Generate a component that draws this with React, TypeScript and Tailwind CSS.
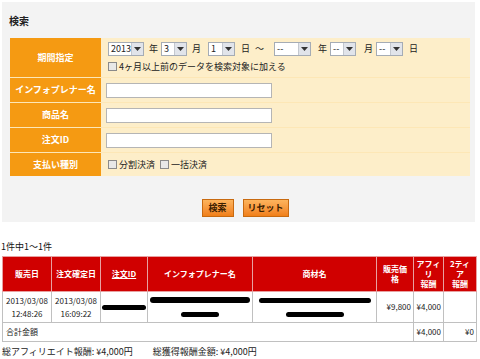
import React from 'react';

const font = { fontFamily: '"Noto Sans CJK JP", "DejaVu Sans", sans-serif' };

function Select({ value, w }: { value: string; w: string }) {
  return (
    <span className={`inline-flex h-[14px] items-center border border-[#a5acb5] bg-white ${w}`}>
      <span className="flex-1 pl-[2px] text-[9px] leading-none text-[#222]">{value}</span>
      <span className="flex h-[12px] w-[12px] items-center justify-center border-l border-[#c4c8cf] bg-[#e1e4ea]">
        <svg width="7" height="4" viewBox="0 0 7 4">
          <path d="M0 0 L7 0 L3.5 4 Z" fill="#333" />
        </svg>
      </span>
    </span>
  );
}

function Check({ label }: { label: string }) {
  return (
    <span className="inline-flex items-center gap-[2px] text-[9px] text-[#222]">
      <span className="inline-block h-[9px] w-[9px] border border-[#8a8a8a] bg-[#e8e8e8]" />
      {label}
    </span>
  );
}

function Label({ children }: { children: React.ReactNode }) {
  return (
    <div className="flex items-center justify-center bg-[#f59a12] text-[9px] font-bold text-white">
      {children}
    </div>
  );
}

function Blob({ className }: { className: string }) {
  return <span className={`block rounded-full bg-black ${className}`} />;
}

export default function App() {
  return (
    <div className="h-[359px] w-[480px] overflow-hidden bg-white" style={font}>
      {/* search panel */}
      <div className="mx-[2px] mt-[2px] h-[220px] w-[473px] bg-[#f3f3f3] pt-[11px]">
        <div className="pl-[7px] text-[10px] font-bold text-[#222]">検索</div>

        <div className="ml-[8px] mt-[10px] grid w-[460px] grid-cols-[91px_1fr] grid-rows-[39px_24px_24px_24px_23px] gap-y-px bg-[#fde7b6]">
          <Label>期間指定</Label>
          <div className="flex flex-col justify-center gap-[4px] bg-[#fdeec9] pl-[7px]">
            <div className="flex items-center text-[9px] text-[#222]">
              <Select value="2013" w="w-[36px]" />
              <span className="ml-[5px] mr-[3px]">年</span>
              <Select value="3" w="w-[26px]" />
              <span className="ml-[5px] mr-[7px]">月</span>
              <Select value="1" w="w-[27px]" />
              <span className="ml-[6px]">日</span>
              <span className="ml-[5px] mr-[10px]">～</span>
              <Select value="--" w="w-[37px]" />
              <span className="ml-[7px] mr-[3px]">年</span>
              <Select value="--" w="w-[26px]" />
              <span className="ml-[8px] mr-[3px]">月</span>
              <Select value="--" w="w-[27px]" />
              <span className="ml-[6px]">日</span>
            </div>
            <Check label="4ヶ月以上前のデータを検索対象に加える" />
          </div>

          <Label>インフォプレナー名</Label>
          <div className="flex items-center bg-[#fdeec9] pl-[5px]">
            <span className="block h-[15px] w-[166px] border border-[#b5b5b5] bg-white" />
          </div>

          <Label>商品名</Label>
          <div className="flex items-center bg-[#fdeec9] pl-[5px]">
            <span className="block h-[15px] w-[166px] border border-[#b5b5b5] bg-white" />
          </div>

          <Label>注文ID</Label>
          <div className="flex items-center bg-[#fdeec9] pl-[5px]">
            <span className="block h-[15px] w-[166px] border border-[#b5b5b5] bg-white" />
          </div>

          <Label>支払い種別</Label>
          <div className="flex items-center gap-[5px] bg-[#fdeec9] pl-[7px]">
            <Check label="分割決済" />
            <Check label="一括決済" />
          </div>
        </div>

        <div className="mt-[23px] flex justify-center gap-[9px] pl-[13px]">
          <button className="h-[18px] w-[32px] border border-[#c86a10] bg-linear-to-b from-[#fdb45c] to-[#f07f16] text-[9px] font-bold text-[#3a2000]">
            検索
          </button>
          <button className="h-[18px] w-[46px] border border-[#c86a10] bg-linear-to-b from-[#fdb45c] to-[#f07f16] text-[9px] font-bold text-[#3a2000]">
            リセット
          </button>
        </div>
      </div>

      {/* results */}
      <div className="mt-[20px] pl-[1px] text-[9px] leading-none text-[#111]">1件中1～1件</div>

      <table className="ml-[2px] mt-[5px] w-[474px] table-fixed border-collapse text-[8px] text-[#222]">
        <colgroup>
          <col className="w-[49px]" />
          <col className="w-[49px]" />
          <col className="w-[47px]" />
          <col className="w-[105px]" />
          <col className="w-[124px]" />
          <col className="w-[37px]" />
          <col className="w-[30px]" />
          <col className="w-[33px]" />
        </colgroup>
        <thead>
          <tr className="h-[35px] bg-[#d00000] text-[8px] font-bold text-white">
            <th className="border border-[#e8a0a0] font-bold">販売日</th>
            <th className="border border-[#e8a0a0] font-bold">注文確定日</th>
            <th className="border border-[#e8a0a0] font-bold underline">注文ID</th>
            <th className="border border-[#e8a0a0] font-bold">インフォプレナー名</th>
            <th className="border border-[#e8a0a0] font-bold">商材名</th>
            <th className="border border-[#e8a0a0] font-bold leading-[10px]">販売価<br />格</th>
            <th className="border border-[#e8a0a0] font-bold leading-[10px]">アフィ<br />リ<br />報酬</th>
            <th className="border border-[#e8a0a0] font-bold leading-[10px]">2ティ<br />ア<br />報酬</th>
          </tr>
        </thead>
        <tbody>
          <tr className="h-[31px]">
            <td className="border border-[#c0c0c0] text-center leading-[13px]">2013/03/08<br />12:48:26</td>
            <td className="border border-[#c0c0c0] text-center leading-[13px]">2013/03/08<br />16:09:22</td>
            <td className="border border-[#c0c0c0]">
              <Blob className="mx-auto h-[5px] w-[44px]" />
            </td>
            <td className="border border-[#c0c0c0]">
              <div className="flex flex-col items-center gap-[9px]">
                <Blob className="h-[6px] w-[100px]" />
                <Blob className="h-[5px] w-[38px]" />
              </div>
            </td>
            <td className="border border-[#c0c0c0]">
              <div className="flex flex-col items-center gap-[9px]">
                <Blob className="h-[5px] w-[112px]" />
                <Blob className="h-[5px] w-[58px]" />
              </div>
            </td>
            <td className="border border-[#c0c0c0] pr-[2px] text-right">¥9,800</td>
            <td className="border border-[#c0c0c0] pr-[2px] text-right">¥4,000</td>
            <td className="border border-[#c0c0c0]" />
          </tr>
          <tr className="h-[19px]">
            <td colSpan={6} className="border border-[#c0c0c0] pl-[3px]">合計金額</td>
            <td className="border border-[#c0c0c0] pr-[2px] text-right">¥4,000</td>
            <td className="border border-[#c0c0c0] pr-[2px] text-right">¥0</td>
          </tr>
        </tbody>
      </table>

      <div className="mt-[3px] flex gap-[20px] pl-[2px] text-[9px] text-[#222]">
        <span>総アフィリエイト報酬: ¥4,000円</span>
        <span>総獲得報酬金額: ¥4,000円</span>
      </div>
    </div>
  );
}
